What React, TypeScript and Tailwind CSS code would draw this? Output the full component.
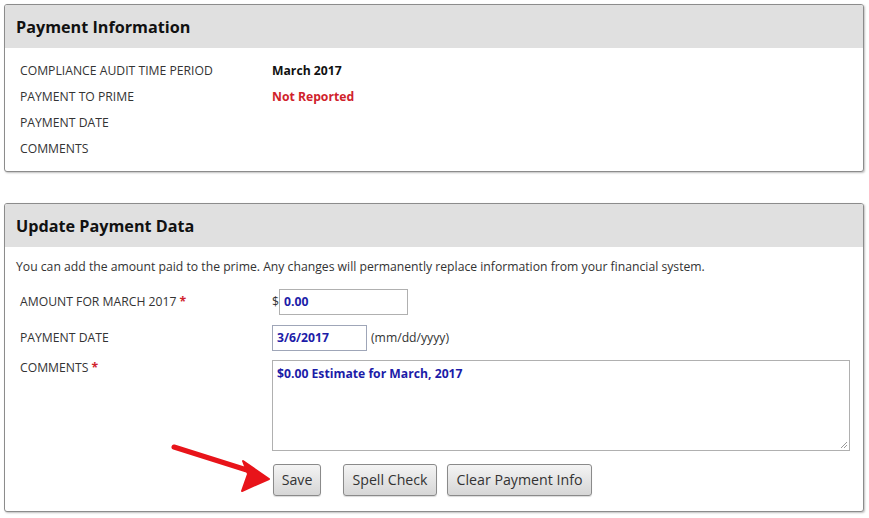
import React from "react";

const font = { fontFamily: '"Open Sans", "Noto Sans", sans-serif' };

function Panel({ title, children }: { title: string; children: React.ReactNode }) {
  return (
    <div className="border border-[#8c8c8c] rounded-[3px] bg-white shadow-[1px_1px_2px_rgba(0,0,0,0.25)] overflow-hidden">
      <div className="h-[43px] bg-[#e0e0e0] flex items-center px-[11px] pt-[2px]">
        <h2 className="text-[16.2px] font-bold text-[#111]">{title}</h2>
      </div>
      {children}
    </div>
  );
}

function Btn({ children, w }: { children: React.ReactNode; w: string }) {
  return (
    <button
      className={`${w} h-[32px] border border-[#8a8a8a] rounded-[3px] bg-gradient-to-b from-[#f4f4f4] to-[#d6d6d6] text-[14.2px] text-[#333] shadow-[0_1px_1px_rgba(0,0,0,0.15)]`}
    >
      {children}
    </button>
  );
}

export default function App() {
  return (
    <div className="relative w-[869px] h-[518px] bg-white pt-[4px] pl-[4px] pr-[5px] overflow-hidden" style={font}>
      <Panel title="Payment Information">
        <div className="pt-[10px] pb-[9px] pl-[15px] text-[12.2px] text-[#333]">
          <div className="flex h-[26px] items-center">
            <div className="w-[252px]">COMPLIANCE AUDIT TIME PERIOD</div>
            <div className="font-bold text-[#111]">March 2017</div>
          </div>
          <div className="flex h-[26px] items-center">
            <div className="w-[252px]">PAYMENT TO PRIME</div>
            <div className="font-bold text-[#d0222b]">Not Reported</div>
          </div>
          <div className="flex h-[26px] items-center">
            <div className="w-[252px]">PAYMENT DATE</div>
          </div>
          <div className="flex h-[26px] items-center">
            <div className="w-[252px]">COMMENTS</div>
          </div>
        </div>
      </Panel>

      <div className="h-[31px]" />

      <Panel title="Update Payment Data">
        <div className="pt-[10px] pb-[15px] pl-[11px] text-[12.2px] text-[#333]">
          <p className="h-[20px] leading-[20px]">
            You can add the amount paid to the prime. Any changes will permanently replace information from your financial system.
          </p>
          <div className="pl-[4px]">
            <div className="flex items-center mt-[12px] h-[26px]">
              <div className="w-[252px]">
                AMOUNT FOR MARCH 2017 <span className="text-[#d0222b] font-bold">*</span>
              </div>
              <span className="w-[7px]">$</span>
              <div className="w-[129px] h-[26px] border border-[#b0b0b0] flex items-center px-[4px] font-bold text-[#1c1ca8]">
                0.00
              </div>
            </div>
            <div className="flex items-center mt-[10px] h-[26px]">
              <div className="w-[252px]">PAYMENT DATE</div>
              <div className="w-[95px] h-[26px] border border-[#9fa6b8] flex items-center px-[4px] font-bold text-[#1c1ca8]">
                3/6/2017
              </div>
              <span className="ml-[4px]">(mm/dd/yyyy)</span>
            </div>
            <div className="flex items-start mt-[9px]">
              <div className="w-[252px] leading-[16px]">
                COMMENTS <span className="text-[#d0222b] font-bold">*</span>
              </div>
              <div className="relative w-[578px] h-[91px] border border-[#b0b0b0] px-[4px] pt-[4px] font-bold text-[#1c1ca8] leading-[18px]">
                $0.00 Estimate for March, 2017
                <svg className="absolute right-[1px] bottom-[1px]" width="8" height="8" viewBox="0 0 8 8">
                  <path d="M7 1 L1 7 M7 4 L4 7" stroke="#999" strokeWidth="1" />
                </svg>
              </div>
            </div>
            <div className="flex mt-[13px] pl-[253px]">
              <Btn w="w-[48px]">Save</Btn>
              <div className="w-[22px]" />
              <Btn w="w-[94px]">Spell Check</Btn>
              <div className="w-[10px]" />
              <Btn w="w-[145px]">Clear Payment Info</Btn>
            </div>
          </div>
        </div>
      </Panel>

      <svg className="absolute left-0 top-0 pointer-events-none" width="869" height="518" viewBox="0 0 869 518">
        <line x1="174" y1="447" x2="250" y2="471" stroke="#e8141a" strokeWidth="5" strokeLinecap="round" />
        <path d="M269 479 L243 461 L248 474 L242 491 Z" fill="#e8141a" stroke="#e8141a" strokeWidth="2" strokeLinejoin="round" />
      </svg>
    </div>
  );
}
